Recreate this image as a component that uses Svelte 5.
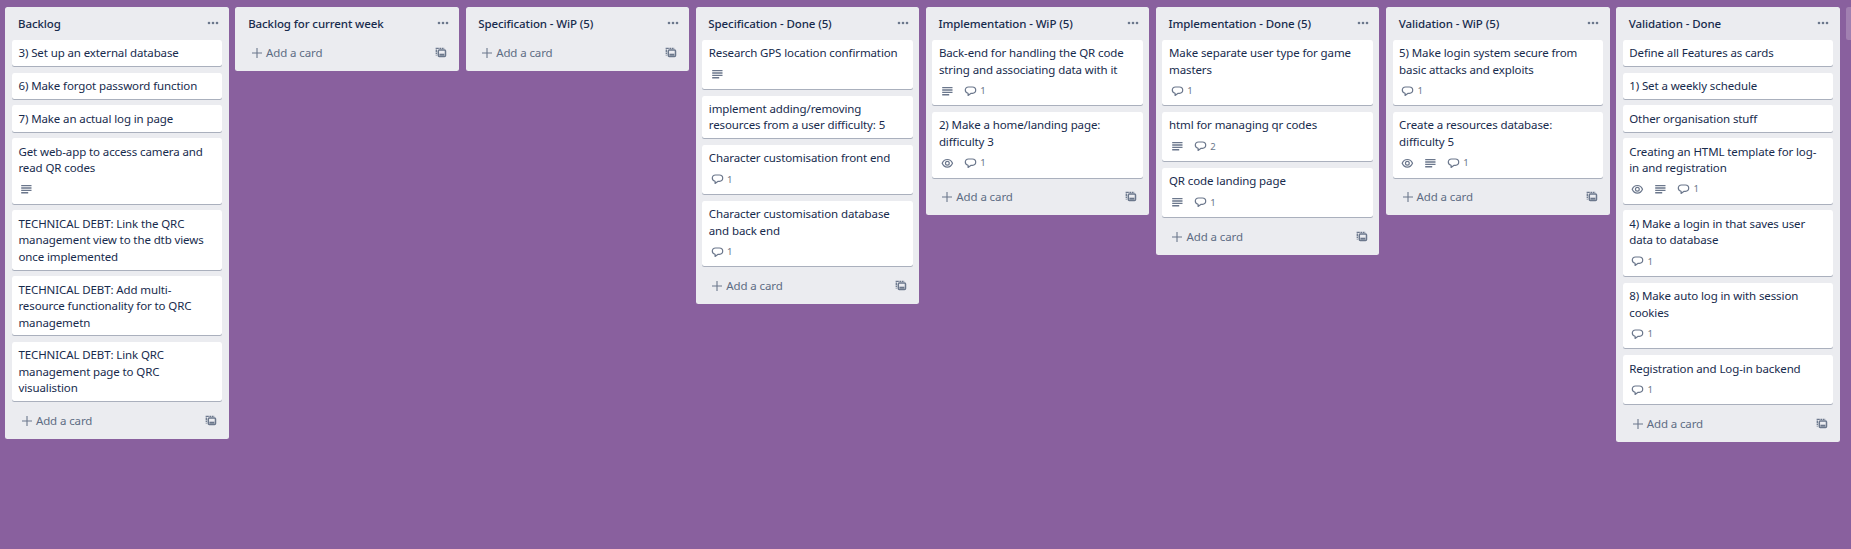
<script>
  const lists = [
    {
      title: 'Backlog',
      cards: [
        { lines: ['3) Set up an external database'] },
        { lines: ['6) Make forgot password function'] },
        { lines: ['7) Make an actual log in page'] },
        { lines: ['Get web-app to access camera and', 'read QR codes'], desc: true },
        { lines: ['TECHNICAL DEBT: Link the QRC', 'management view to the dtb views', 'once implemented'] },
        { lines: ['TECHNICAL DEBT: Add multi-', 'resource functionality for to QRC', 'managemetn'] },
        { lines: ['TECHNICAL DEBT: Link QRC', 'management page to QRC', 'visualistion'] },
      ],
    },
    { title: 'Backlog for current week', cards: [] },
    { title: 'Specification - WiP (5)', cards: [] },
    {
      title: 'Specification - Done (5)',
      cards: [
        { lines: ['Research GPS location confirmation'], desc: true },
        { lines: ['implement adding/removing', 'resources from a user difficulty: 5'] },
        { lines: ['Character customisation front end'], comments: 1 },
        { lines: ['Character customisation database', 'and back end'], comments: 1 },
      ],
    },
    {
      title: 'Implementation - WiP (5)',
      cards: [
        { lines: ['Back-end for handling the QR code', 'string and associating data with it'], desc: true, comments: 1 },
        { lines: ['2) Make a home/landing page:', 'difficulty 3'], watch: true, comments: 1 },
      ],
    },
    {
      title: 'Implementation - Done (5)',
      cards: [
        { lines: ['Make separate user type for game', 'masters'], comments: 1 },
        { lines: ['html for managing qr codes'], desc: true, comments: 2 },
        { lines: ['QR code landing page'], desc: true, comments: 1 },
      ],
    },
    {
      title: 'Validation - WiP (5)',
      cards: [
        { lines: ['5) Make login system secure from', 'basic attacks and exploits'], comments: 1 },
        { lines: ['Create a resources database:', 'difficulty 5'], watch: true, desc: true, comments: 1 },
      ],
    },
    {
      title: 'Validation - Done',
      cards: [
        { lines: ['Define all Features as cards'] },
        { lines: ['1) Set a weekly schedule'] },
        { lines: ['Other organisation stuff'] },
        { lines: ['Creating an HTML template for log-', 'in and registration'], watch: true, desc: true, comments: 1 },
        { lines: ['4) Make a login in that saves user', 'data to database'], comments: 1 },
        { lines: ['8) Make auto log in with session', 'cookies'], comments: 1 },
        { lines: ['Registration and Log-in backend'], comments: 1 },
      ],
    },
  ];
</script>

<main class="board">
  {#each lists as list}
    <section class="list">
      <header>
        <h2>{list.title}</h2>
        <svg class="dots" viewBox="0 0 12 4"><circle cx="2" cy="2" r="1.3" /><circle cx="6" cy="2" r="1.3" /><circle cx="10" cy="2" r="1.3" /></svg>
      </header>
      {#each list.cards as card}
        <article class="card">
          <p>{#each card.lines as line}<span>{line}</span>{/each}</p>
          {#if card.watch || card.desc || card.comments}
            <div class="badges">
              {#if card.watch}
                <div class="badge"><svg viewBox="0 0 13 13" fill="none" stroke="currentColor" stroke-width="1.2"><path d="M1.2 6.3C3.3 1.2 9.4 1.2 11.5 6.3C9.4 11.4 3.3 11.4 1.2 6.3Z" /><circle cx="6.35" cy="6.3" r="1.9" /></svg></div>
              {/if}
              {#if card.desc}
                <div class="badge"><svg viewBox="0 0 13 13" fill="currentColor"><path d="M1.2 1.9h10.3v1.4H1.2zM1.2 4.3h10.3v1.4H1.2zM1.2 6.7h10.3v1.4H1.2zM1.2 9.1h7v1.3h-7z" /></svg></div>
              {/if}
              {#if card.comments}
                <div class="badge"><svg viewBox="0 0 13 13" fill="none" stroke="currentColor" stroke-width="1.2"><path d="M4.1 8.3C2.2 7.9 1.3 6.8 1.3 5.1C1.3 3.2 2.5 2 4.5 2H8.4C10.4 2 11.7 3.2 11.7 5.1C11.7 7.1 10.4 8.3 8.4 8.3H7.1L4.1 10.4Z" stroke-linejoin="round" /></svg><span>{card.comments}</span></div>
              {/if}
            </div>
          {/if}
        </article>
      {/each}
      <footer>
        <svg class="plus" viewBox="0 0 12 12"><path d="M6 1v10M1 6h10" /></svg>
        <span>Add a card</span>
        <svg class="template" viewBox="0 0 12 12" fill="none" stroke="currentColor"><path d="M1.3 .7V8.6M2 1.3H9.4" stroke-width="1.3" stroke-dasharray="1.8 .6" /><rect x="3.3" y="2.9" width="7.2" height="6.7" rx="1" stroke-width="1.5" /><path d="M4.4 7.7h5" stroke-width="2" /></svg>
      </footer>
    </section>
  {/each}
  <div class="add-list"></div>
</main>

<style>
  :global(body) { background: #89609e; overflow: hidden; }
  .board {
    --u: 0.8219px;
    display: flex;
    align-items: flex-start;
    gap: calc(var(--u) * 8);
    height: 549px;
    box-sizing: border-box;
    padding: 6.8px 0 0 5.33px;
    overflow: hidden;
    background: #89609e;
    color: #172b4d;
    font: 11.5px/calc(var(--u) * 20) "Noto Sans", "Open Sans", sans-serif;
    letter-spacing: -0.11px;
  }
  .list {
    flex: none;
    width: calc(var(--u) * 272);
    border-radius: 2.5px;
    background: #ebecf0;
  }
  header {
    display: flex;
    align-items: center;
    justify-content: space-between;
    height: calc(var(--u) * 40);
    padding: 0 10.2px 0 12.7px;
    box-sizing: border-box;
  }
  h2 { margin: 0; padding-top: 1px; font-size: 11.5px; font-weight: 500; letter-spacing: -0.1px; }
  .dots { width: 12px; height: 4px; fill: #6b778c; }
  .card {
    margin: 0 calc(var(--u) * 8) calc(var(--u) * 8);
    padding: calc(var(--u) * 6.7) calc(var(--u) * 8) calc(var(--u) * 5.3);
    border-radius: 2.5px;
    background: #fff;
    box-shadow: 0 1px 0 rgba(9, 30, 66, 0.29);
  }
  p { margin: 0; }
  p span { display: block; white-space: nowrap; }
  .badges { display: flex; height: calc(var(--u) * 28); color: #6b778c; }
  .badge {
    display: flex;
    align-items: center;
    min-width: 16.4px;
    height: 16.4px;
    margin: 4.9px 6.6px 0 0;
    padding-left: 1.9px;
    box-sizing: border-box;
  }
  .badge svg { width: 13px; height: 13px; flex: none; }
  .badge span { font-size: 9.6px; margin-left: 3.4px; }
  footer {
    display: flex;
    align-items: center;
    height: calc(var(--u) * 38);
    padding: 0 11.9px 5px 15.6px;
    box-sizing: border-box;
    color: #5e6c84;
  }
  .plus { width: 12px; height: 12px; margin-right: 3px; fill: none; stroke: #6b778c; stroke-width: 1.1; }
  .template { width: 12px; height: 12px; margin-left: auto; color: #6b778c; }
  .add-list { flex: none; width: calc(var(--u) * 272); height: 33px; border-radius: 2.5px; background: #a180b1; }
</style>
